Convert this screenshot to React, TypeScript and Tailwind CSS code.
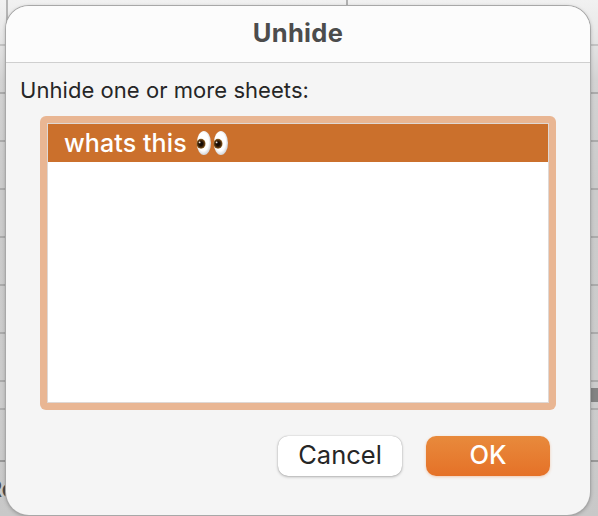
function Eyes() {
  return (
    <svg width="32" height="26" viewBox="0 0 32 26" role="img" aria-label="eyes" className="-mt-px">
      <defs>
        <radialGradient id="white" cx="45%" cy="45%" r="58%">
          <stop offset="0.65" stopColor="#ffffff" />
          <stop offset="1" stopColor="#c9ccd0" />
        </radialGradient>
        <radialGradient id="iris">
          <stop offset="0.35" stopColor="#160b04" />
          <stop offset="0.7" stopColor="#4a2b0c" />
          <stop offset="1" stopColor="#94682a" />
        </radialGradient>
      </defs>
      {[0, 17].map((x) => (
        <g key={x} transform={`translate(${x} 0)`}>
          <ellipse cx="7.9" cy="13" rx="7.1" ry="12.1" fill="url(#white)" />
          <ellipse cx="5" cy="13.8" rx="4.5" ry="5" fill="url(#iris)" />
          <circle cx="3.6" cy="12.4" r="0.9" fill="#e9e2dc" />
        </g>
      ))}
    </svg>
  );
}

const rowHeights = [46, 48, 48, 48, 48, 48, 48, 48];

function SheetBackdrop() {
  return (
    <div className="absolute inset-0 bg-[linear-gradient(180deg,#f1f1f1_0px,#e9e9e9_30px,#d3d3d3_80px,#cbcbcb_180px,#cccccc_400px,#c8c8c8_516px)]">
      {rowHeights.map((h, i) => (
        <div
          key={i}
          className={i === 0 ? "border-b-2 border-[#c3c3c3]" : "border-b-2 border-[#ababab]"}
          style={{ height: h }}
        />
      ))}
      <div className="flex h-[28px] items-center justify-end border-b-2 border-[#adadad]">
        <div className="h-[14px] w-[9px] bg-[#838383]" />
      </div>
      <div className="h-[52px] border-b-2 border-[#989898]" />
      <div className="-ml-[13px] pt-[13px] text-[23px] leading-[28px] font-bold text-[#4d4d4d]">Re</div>
      <div className="absolute left-[6px] top-0 h-[24px] w-[2px] bg-[#b5b5b5]" />
      <div className="absolute left-[346px] top-0 h-[6px] w-[2px] bg-[#b0b0b0]" />
    </div>
  );
}

export default function App() {
  return (
    <div className="relative h-[516px] w-[598px] overflow-hidden font-['Inter','Liberation_Sans',sans-serif]">
      <SheetBackdrop />
      <section className="relative mt-[6px] ml-[6px] flex h-[509px] w-[584px] flex-col overflow-hidden rounded-[23px] bg-[#f5f5f5] shadow-[0_0_0_1px_#a8a8a8,0_1px_4px_#00000055]">
        <header className="flex h-[57px] shrink-0 justify-center border-b border-b-[#cfcfcf] bg-[#fcfcfc] pt-[11px]">
          <h1 className="text-[25.5px] leading-[32px] font-bold tracking-[0.3px] text-[#4c4c4c]">Unhide</h1>
        </header>
        <p className="mt-[12px] ml-[14px] text-[22px] leading-[30px] tracking-[0.05px] whitespace-nowrap text-[#262626]">
          Unhide one or more sheets:
        </p>
        <div className="mt-[11px] ml-[34px] h-[294px] w-[516px] shrink-0 rounded-[6px] bg-[#e9b693] p-[7px]">
          <div className="h-full border border-[#dfd8d4] bg-white">
            <div className="flex h-[38px] items-center bg-[#cb702c] pl-[16px] text-[25px] leading-[38px] font-medium tracking-[0.1px] text-white">
              <span className="w-[132px] whitespace-nowrap">whats this</span>
              <Eyes />
            </div>
          </div>
        </div>
        <footer className="mt-[26px] mr-[40px] flex justify-end gap-[24px] text-[25.5px] leading-[38px]">
          <button className="flex h-[40px] w-[124px] justify-center rounded-[10px] bg-white text-[#262626] shadow-[0_0_1px_#00000055,0_1px_3px_#00000044]">Cancel</button>
          <button className="flex h-[40px] w-[124px] justify-center rounded-[10px] bg-linear-to-b from-[#e88a3c] to-[#e57127] font-medium text-white shadow-[0_1px_3px_#e5712755]">OK</button>
        </footer>
      </section>
    </div>
  );
}
